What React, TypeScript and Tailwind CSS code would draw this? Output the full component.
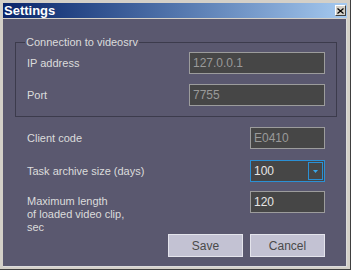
import React from 'react'

const labelCls = 'text-[#dcdcdc]'
const boxCls =
  'h-[22px] bg-[#464646] border border-[#9c9c9c] flex items-center px-[3px] text-[12px]'

function TextBox({ value, disabled, width }: { value: string; disabled?: boolean; width: string }) {
  return (
    <div className={`${boxCls} ${width} ${disabled ? 'text-[#9a9a9a]' : 'text-[#e6e6e6]'}`}>{value}</div>
  )
}

export default function App() {
  return (
    <div
      className="w-[351px] h-[270px] bg-[#d4d0c8] flex flex-col pl-[3px] pt-[3px] pr-[3px] pb-[2px] border-r border-b border-[#404040] text-[11px]"
      style={{ fontFamily: '"Liberation Sans", Arial, sans-serif' }}
    >
      {/* Title bar */}
      <div className="h-[15px] bg-linear-to-r from-[#0a246a] to-[#a6caf0] flex items-center justify-between pl-[1px] pr-[1px]">
        <span className="text-white font-bold text-[13px] leading-none">Settings</span>
        <button className="w-[11px] h-[11px] bg-[#d4d0c8] border-t border-l border-white border-r border-b border-r-[#404040] border-b-[#404040] flex items-center justify-center">
          <svg width="7" height="6" viewBox="0 0 7 6">
            <path d="M0.5 0.5 L6.5 5.5 M6.5 0.5 L0.5 5.5" stroke="#000" strokeWidth="1.2" />
          </svg>
        </button>
      </div>

      {/* Client area */}
      <div className="mt-[1px] flex-1 bg-[#5a586f] border-r border-b border-[#dcdcdc] pl-[12px] pr-[9px]">
        {/* Group box */}
        <div className="relative mt-[23px] border border-[#3c3b4c] pt-[9px] pb-[10px] pl-[11px] pr-[11px] flex flex-col gap-[10px]">
          <span className={`absolute -top-[8px] left-[9px] bg-[#5a586f] px-[1px] leading-[14px] ${labelCls}`}>
            Connection to videosrv
          </span>
          <div className="flex items-center justify-between">
            <span className={labelCls}>IP address</span>
            <TextBox value="127.0.0.1" disabled width="w-[136px]" />
          </div>
          <div className="flex items-center justify-between">
            <span className={labelCls}>Port</span>
            <TextBox value="7755" disabled width="w-[136px]" />
          </div>
        </div>

        {/* Other settings */}
        <div className="pl-[12px] pr-[12px] mt-[10px] flex flex-col">
          <div className="flex items-center justify-between">
            <span className={labelCls}>Client code</span>
            <TextBox value="E0410" disabled width="w-[75px]" />
          </div>
          <div className="mt-[11px] flex items-center justify-between">
            <span className={labelCls}>Task archive size (days)</span>
            <div className="w-[75px] h-[22px] bg-[#464646] border border-[#2b90d4] flex items-center justify-between pl-[3px] pr-[1px] text-[12px] text-[#e6e6e6]">
              <span>100</span>
              <div className="w-[15px] h-[18px] border border-[#2b90d4] flex items-center justify-center">
                <svg width="5" height="3" viewBox="0 0 5 3">
                  <path d="M0 0 H5 L2.5 3 Z" fill="#3aa6e8" />
                </svg>
              </div>
            </div>
          </div>
          <div className="mt-[9px] flex items-start justify-between">
            <span className={`${labelCls} leading-[13px] mt-[4px]`}>
              Maximum length
              <br />
              of loaded video clip,
              <br />
              sec
            </span>
            <TextBox value="120" width="w-[75px]" />
          </div>
          <div className="mt-[0px] flex justify-end gap-[7px]">
            <button className="w-[75px] h-[23px] bg-[#c3c2d3] border border-[#e4e4ec] text-[#4a4a4a] text-[12px]">
              Save
            </button>
            <button className="w-[75px] h-[23px] bg-[#c3c2d3] border border-[#e4e4ec] text-[#4a4a4a] text-[12px]">
              Cancel
            </button>
          </div>
        </div>
      </div>
    </div>
  )
}
